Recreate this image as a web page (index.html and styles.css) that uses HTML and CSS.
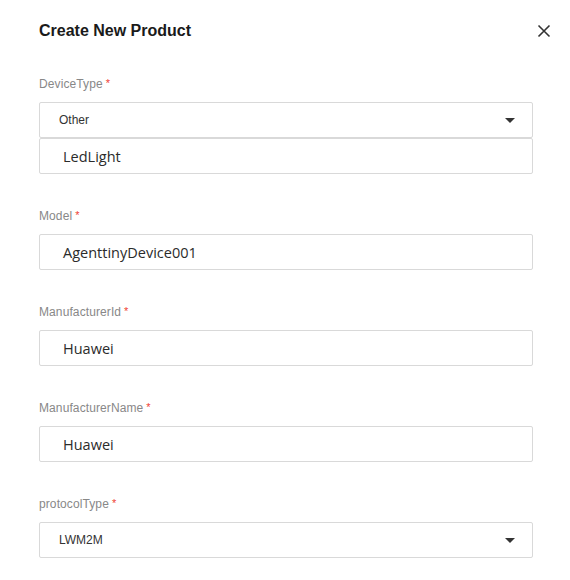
FILE: index.html
```html
<!DOCTYPE html>
<html lang="en">
<head>
<meta charset="utf-8">
<title>Create New Product</title>
<link rel="stylesheet" href="styles.css">
</head>
<body>
<div class="dialog">
  <div class="header">
    <h1 class="title">Create New Product</h1>
    <button class="close" aria-label="Close">
      <svg width="14" height="14" viewBox="0 0 14 14"><path d="M1.5 1.5 L12.5 12.5 M12.5 1.5 L1.5 12.5" stroke="#333" stroke-width="1.6" fill="none"/></svg>
    </button>
  </div>
  <div class="form">
    <div class="field">
      <div class="label">DeviceType<span class="req">*</span></div>
      <div class="select"><span class="select-text">Other</span><span class="caret"></span></div>
      <div class="input">LedLight</div>
    </div>
    <div class="field">
      <div class="label">Model<span class="req">*</span></div>
      <div class="input">AgenttinyDevice001</div>
    </div>
    <div class="field">
      <div class="label">ManufacturerId<span class="req">*</span></div>
      <div class="input">Huawei</div>
    </div>
    <div class="field">
      <div class="label">ManufacturerName<span class="req">*</span></div>
      <div class="input">Huawei</div>
    </div>
    <div class="field">
      <div class="label">protocolType<span class="req">*</span></div>
      <div class="select"><span class="select-text">LWM2M</span><span class="caret"></span></div>
    </div>
  </div>
</div>
</body>
</html>
```
FILE: styles.css
```css
* { box-sizing: border-box; }
html, body { margin: 0; padding: 0; background: #fff; }
body {
  font-family: "Liberation Sans", Arial, sans-serif;
  color: #333;
}
.dialog {
  width: 570px;
  padding: 20px 19px 0 39px;
}
.header {
  display: flex;
  justify-content: space-between;
  align-items: center;
  height: 22px;
}
.title {
  margin: 0;
  font-size: 16px;
  line-height: 22px;
  font-weight: bold;
  color: #1a1a1a;
}
.close {
  width: 14px;
  height: 14px;
  padding: 0;
  border: 0;
  background: transparent;
  display: flex;
}
.form {
  margin-top: 34px;
  margin-right: 18px;
}
.field { margin-bottom: 34px; }
.label {
  font-size: 12px;
  line-height: 16px;
  height: 16px;
  color: #888;
  margin-bottom: 10px;
  letter-spacing: 0.1px;
}
.req {
  color: #f04134;
  font-size: 11px;
  margin-left: 3px;
  position: relative;
  top: -1px;
}
.select {
  height: 36px;
  border: 1px solid #d9d9d9;
  border-radius: 2px;
  display: flex;
  align-items: center;
  justify-content: space-between;
  padding: 0 17px 0 19px;
}
.select-text {
  font-size: 12px;
  color: #333;
}
.caret {
  width: 0;
  height: 0;
  border-left: 5px solid transparent;
  border-right: 5px solid transparent;
  border-top: 5px solid #333;
}
.input {
  height: 36px;
  border: 1px solid #d9d9d9;
  border-radius: 2px;
  display: flex;
  align-items: center;
  padding-left: 23px;
  font-family: "Open Sans", "Liberation Sans", sans-serif;
  font-size: 14.5px;
  color: #2b2b2b;
}
```
